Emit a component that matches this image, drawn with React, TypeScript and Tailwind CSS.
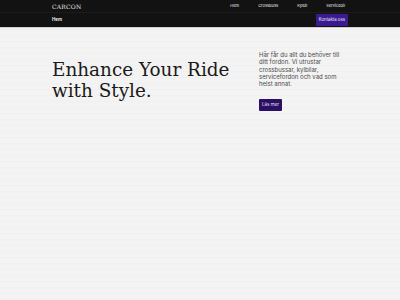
import React from "react";

const links = ["Hem", "Crossbuss", "Kylbil", "Servicebil"];

const App = () => {
  return (
    <div className="min-h-[300px] w-[400px] bg-[#f3f3f3] font-['Inter',sans-serif] bg-[repeating-linear-gradient(to_bottom,#f3f3f3_0px,#f3f3f3_5px,#f0f0f0_5px,#f0f0f0_6px)]">
      {/* Header */}
      <header className="bg-[#121212]">
        <div className="flex h-[13px] items-center justify-between px-[52px] border-b border-[#1c1c1c]">
          <span className="font-['DejaVu_Serif',serif] text-[6px] tracking-[0.2px] text-[#e8e8e8]">
            CARCON
          </span>
          <nav className="flex items-center gap-[19px] pr-[3px] text-[4px] text-[#ececec]">
            {links.map((l) => (
              <span key={l}>{l}</span>
            ))}
          </nav>
        </div>
        <div className="flex h-[15px] items-center justify-between px-[52px] border-b border-[#cfcfcf]">
          <span className="text-[4.5px] font-semibold text-white">Hem</span>
          <button className="rounded-[1px] bg-[#3b1a8f] px-[3px] py-[3px] text-[4.3px] text-[#f0ecff]">
            Kontakta oss
          </button>
        </div>
      </header>

      {/* Hero */}
      <main className="flex justify-between pl-[52px] pr-[52px] pt-[23px]">
        <h1 className="mt-[9px] font-['DejaVu_Serif',serif] text-[18.4px] leading-[20.5px] text-[#1a1a1a]">
          Enhance Your Ride
          <br />
          with Style.
        </h1>
        <div className="w-[89px]">
          <p className="text-[6px] leading-[7.3px] text-[#4a4a4a]">
            Här får du allt du behöver till ditt fordon. Vi utrustar
            crossbussar, kylbilar, servicefordon och vad som helst annat.
          </p>
          <button className="mt-[12px] rounded-[1px] bg-[#2a0f63] px-[3px] py-[2.5px] text-[4.5px] text-[#ece8ff]">
            Läs mer
          </button>
        </div>
      </main>
    </div>
  );
};

export default App;
